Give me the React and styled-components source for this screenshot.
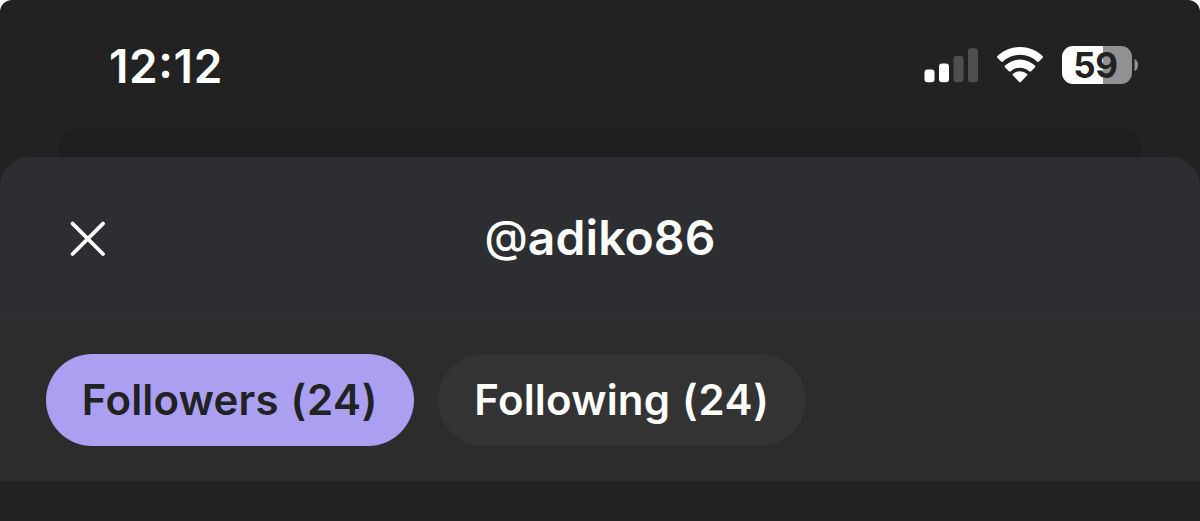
import React from 'react';
import styled, { createGlobalStyle } from 'styled-components';

const COLORS = {
    base: '#222222',
    behind: '#1f1f1f',
    header: '#2d2e32',
    tabs: '#2c2c2c',
    pill: '#333333',
    accent: '#ab9ff2',
    white: '#ffffff',
    dark: '#222222',
};

const GlobalStyle = createGlobalStyle`
    * {
        box-sizing: border-box;
    }
    body {
        margin: 0;
        background: ${COLORS.white};
        font-family: Inter, "Liberation Sans", sans-serif;
    }
`;

const Screen = styled.div`
    width: 1200px;
    height: 521px;
    overflow: hidden;
    display: flex;
    flex-direction: column;
    background: ${COLORS.base};
    border-radius: 12px 12px 0 0;
`;

const StatusBar = styled.div`
    height: 128px;
    flex: none;
    display: flex;
    align-items: flex-start;
    justify-content: space-between;
    padding: 46px 61px 0 109px;
`;

const Clock = styled.div`
    display: flex;
    height: 38px;
    font-size: 46px;
    line-height: 40px;
    font-weight: 600;
    letter-spacing: 0.6px;
    color: ${COLORS.white};
`;

const Colon = styled.span`
    margin-top: -5px;
`;

const Indicators = styled.div`
    display: flex;
    align-items: flex-start;
`;

const Signal = styled.svg`
    display: block;
    margin-right: 17px;
`;

const Wifi = styled.svg`
    display: block;
    margin-right: 18px;
`;

const Battery = styled.div`
    display: flex;
    align-items: center;
    gap: 2px;
`;

const BatteryLevel = styled.div`
    width: 70px;
    height: 38px;
    border-radius: 11px;
    display: flex;
    align-items: center;
    justify-content: center;
    padding-right: 3px;
    background: linear-gradient(to right, ${COLORS.white} 58%, #919191 58%);
    font-size: 35px;
    line-height: 38px;
    font-weight: 700;
    letter-spacing: -0.3px;
    color: ${COLORS.dark};
`;

const BatteryTip = styled.svg`
    display: block;
`;

const SheetBehind = styled.div`
    height: 29px;
    flex: none;
    margin: 0 59px;
    border-radius: 24px 24px 0 0;
    background: ${COLORS.behind};
`;

const Sheet = styled.div`
    flex: none;
    overflow: hidden;
    border-radius: 30px 30px 0 0;
    background: ${COLORS.tabs};
`;

const Header = styled.header`
    height: 162px;
    display: grid;
    grid-template-columns: 1fr auto 1fr;
    align-items: center;
    padding: 0 70px;
    background: ${COLORS.header};
`;

const CloseButton = styled.button`
    width: 36px;
    height: 36px;
    margin-top: 1px;
    padding: 0;
    border: 0;
    background: none;
`;

const CloseIcon = styled.svg`
    display: block;
`;

const Title = styled.h1`
    display: flex;
    align-items: center;
    margin: 0;
    font-size: 48px;
    line-height: 60px;
    font-weight: 600;
    letter-spacing: 0.1px;
    color: ${COLORS.white};
`;

const AtSign = styled.span`
    padding-bottom: 4px;
    font-size: 44px;
    font-weight: 500;
`;

const Tabs = styled.div`
    height: 162px;
    display: flex;
    align-items: center;
    gap: 24px;
    padding: 0 46px;
`;

const Tab = styled.button`
    width: 368px;
    height: 92px;
    padding: 0;
    border: 0;
    border-radius: 46px;
    font-family: inherit;
    font-size: 42px;
    line-height: 52px;
    font-weight: 600;
    letter-spacing: 0.2px;
    background: ${props => props.$active ? COLORS.accent : COLORS.pill};
    color: ${props => props.$active ? COLORS.dark : COLORS.white};
`;

const Count = styled.span`
    margin-left: 1px;
    letter-spacing: 0.7px;
`;

const tabs = [
    { label: 'Followers', count: 24 },
    { label: 'Following', count: 24 },
];

class App extends React.Component {

    state = { active: 'Followers' };

    render () {
        const { active } = this.state;
        return (
            <Screen>
                <GlobalStyle />
                <StatusBar>
                    <Clock>12<Colon>:</Colon>12</Clock>
                    <Indicators>
                        <Signal width="55" height="38" viewBox="0 0 55 38" fill="#fff">
                            <rect x="0.5" y="23.5" width="10" height="12.8" rx="3" />
                            <rect x="15" y="17.5" width="10" height="18.8" rx="3" />
                            <rect x="29.5" y="10" width="10" height="26.3" rx="3" fill="#4e4e4e" />
                            <rect x="44" y="2.3" width="10" height="34" rx="3" fill="#4e4e4e" />
                        </Signal>
                        <Wifi width="48" height="38" viewBox="0 0 48 38" fill="#fff">
                            <path d="M1.4 11.8Q0.4 10.8 1.4 9.9A33 33 0 0 1 46.6 9.9Q47.6 10.8 46.6 11.8L42.9 15.5Q42 16.4 41 15.5A25 25 0 0 0 7 15.5Q6 16.4 5.1 15.5Z" />
                            <path d="M9.1 19.6A21.5 21.5 0 0 1 38.9 19.6Q39.9 20.6 38.9 21.5L35.1 25.2Q34.2 26.1 33.2 25.2A13.8 13.8 0 0 0 14.8 25.2Q13.8 26.1 12.9 25.2L9.1 21.5Q8.1 20.6 9.1 19.6Z" />
                            <path d="M17 27.8A10.5 10.5 0 0 1 31 27.8Q31.8 28.7 31 29.6L25 35.7Q24 36.7 23 35.7L17 29.6Q16.2 28.7 17 27.8Z" />
                        </Wifi>
                        <Battery>
                            <BatteryLevel>59</BatteryLevel>
                            <BatteryTip width="5" height="14" viewBox="0 0 5 14" fill="#919191">
                                <path d="M0.5 0.8Q4 2.8 4 7T0.5 13.2Z" />
                            </BatteryTip>
                        </Battery>
                    </Indicators>
                </StatusBar>
                <SheetBehind />
                <Sheet>
                    <Header>
                        <CloseButton aria-label="Close">
                            <CloseIcon width="36" height="36" viewBox="0 0 36 36" stroke="#fff" strokeWidth="3.8" strokeLinecap="round">
                                <path d="M2.6 2.6L33 33M33 2.6L2.6 33" />
                            </CloseIcon>
                        </CloseButton>
                        <Title><AtSign>@</AtSign>adiko86</Title>
                    </Header>
                    <Tabs>
                        {tabs.map(({ label, count }) => (
                            <Tab
                                key={label}
                                $active={label === active}
                                onClick={() => this.setState({ active: label })}
                            >
                                {label} <Count>({count})</Count>
                            </Tab>
                        ))}
                    </Tabs>
                </Sheet>
            </Screen>
        );
    }
}

export default App;
